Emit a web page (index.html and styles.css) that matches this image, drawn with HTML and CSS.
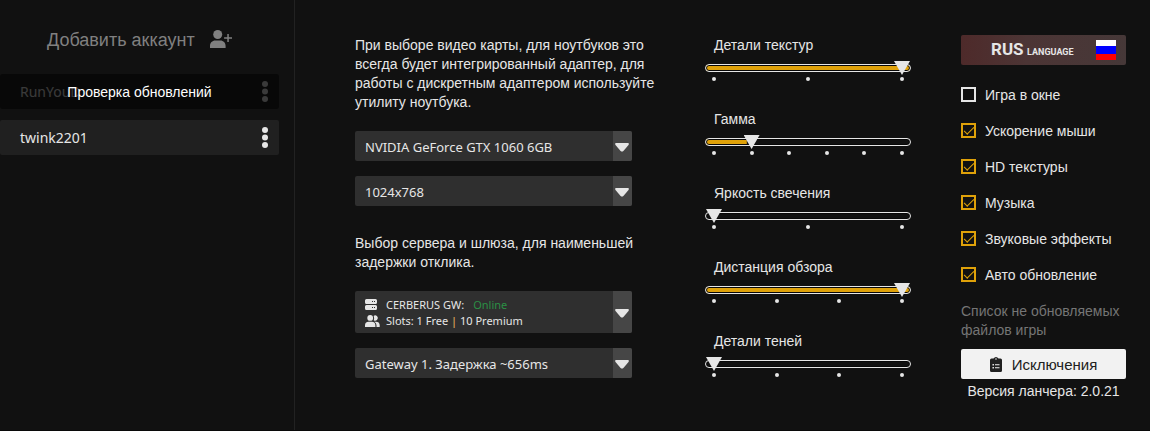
FILE: index.html
```html
<!DOCTYPE html>
<html lang="ru">
<head>
<meta charset="utf-8">
<meta name="viewport" content="width=device-width, initial-scale=1">
<title>Лаунчер</title>
<link rel="stylesheet" href="styles.css">
</head>
<body>
<div class="launcher">
  <aside class="sidebar">
    <button class="add-account" type="button">
      <span class="add-label">Добавить аккаунт</span>
      <svg class="add-icon" viewBox="0 0 23 18" aria-hidden="true"><circle cx="7.700" cy="4.500" r="4.500"/><path d="M0 18v-2c0-3.200 2.300-5.500 5.200-5.500h5.200c2.900 0 5.200 2.300 5.200 5.500v2zM17.300 4h1.500v3.300h3.200v1.500h-3.200V12h-1.500V8.800h-3.200V7.300h3.200z"/></svg>
    </button>
    <ul class="accounts">
      <li class="account">
        <span>RunYouD</span>
        <button class="dots" type="button" aria-label="Меню RunYouD"><svg viewBox="0 0 6 21" aria-hidden="true"><circle cx="3" cy="3" r="3"/><circle cx="3" cy="10.500" r="3"/><circle cx="3" cy="18" r="3"/></svg></button>
        <span class="account-overlay">Проверка обновлений</span>
      </li>
      <li class="account">
        <span>twink2201</span>
        <button class="dots" type="button" aria-label="Меню twink2201"><svg viewBox="0 0 6 21" aria-hidden="true"><circle cx="3" cy="3" r="3"/><circle cx="3" cy="10.500" r="3"/><circle cx="3" cy="18" r="3"/></svg></button>
      </li>
    </ul>
  </aside>
  <main class="settings">
    <section class="connection">
      <p class="hint" id="video-hint">При выборе видео карты, для ноутбуков это всегда будет интегрированный адаптер, для работы с дискретным адаптером используйте утилиту ноутбука.</p>
      <div class="fields">
        <div class="dropdown">
          <select class="choice" aria-labelledby="video-hint"><option>NVIDIA GeForce GTX 1060 6GB</option></select>
          <span class="arrow"><svg viewBox="0 0 14 9" aria-hidden="true"><path d="M1.200 0h11.600q1.800.3.700 1.900L8.400 7.900q-1.400 1.400-2.800 0L.5 1.900Q-.6.3 1.200 0z"/></svg></span>
        </div>
        <div class="dropdown">
          <select class="choice" aria-label="Разрешение"><option>1024x768</option></select>
          <span class="arrow"><svg viewBox="0 0 14 9" aria-hidden="true"><path d="M1.200 0h11.600q1.800.3.700 1.900L8.400 7.900q-1.400 1.400-2.800 0L.5 1.900Q-.6.3 1.200 0z"/></svg></span>
        </div>
      </div>
      <p class="hint server-hint" id="gate-hint">Выбор сервера и шлюза, для наименьшей задержки отклика.</p>
      <div class="fields">
        <button class="dropdown server" type="button">
          <span class="server-info">
            <span class="server-line"><svg class="server-icon" viewBox="0 0 15 12" aria-hidden="true"><path fill-rule="evenodd" d="M1.500 0h9Q12 0 12 1.500v2Q12 5 10.500 5h-9Q0 5 0 3.500v-2Q0 0 1.500 0zM7 2v1h1V2zm2 0v1h1V2zM1.500 6h9Q12 6 12 7.500v2q0 1.500-1.500 1.500h-9Q0 11 0 9.500v-2Q0 6 1.500 6zM7 8v1h1V8zm2 0v1h1V8z"/></svg><span>CERBERUS GW:</span><span class="online">Online</span></span>
            <span class="server-line"><svg class="server-icon" viewBox="0 0 15 12" aria-hidden="true"><circle cx="5.200" cy="2.900" r="2.900"/><path d="M0 12v-1.500q0-3.700 3.600-3.700h3.200q3.600 0 3.600 3.700V12zM8.600.9a2.600 2.600 0 1 1 .1 4.300q.9-2.200-.1-4.300zM9.300 6.700h1.600q3.600 0 3.800 3.400V12h-3.200v-1.700q0-2.200-2.200-3.600z"/></svg><span>Slots: 1 Free <span class="bar">|</span> 10 Premium</span></span>
          </span>
          <span class="arrow"><svg viewBox="0 0 14 9" aria-hidden="true"><path d="M1.200 0h11.600q1.800.3.700 1.900L8.400 7.900q-1.400 1.400-2.800 0L.5 1.900Q-.6.3 1.200 0z"/></svg></span>
        </button>
        <div class="dropdown">
          <select class="choice" aria-labelledby="gate-hint"><option>Gateway 1. Задержка ~656ms</option></select>
          <span class="arrow"><svg viewBox="0 0 14 9" aria-hidden="true"><path d="M1.200 0h11.600q1.800.3.700 1.900L8.400 7.900q-1.400 1.400-2.800 0L.5 1.900Q-.6.3 1.200 0z"/></svg></span>
        </div>
      </div>
    </section>
    <section class="sliders">
      <div class="slider">
        <label for="textures">Детали текстур</label>
        <input id="textures" type="range" min="0" max="2" value="2" style="--fill:100%">
        <div class="ticks"><i></i><i></i><i></i></div>
      </div>
      <div class="slider">
        <label for="gamma">Гамма</label>
        <input id="gamma" type="range" min="0" max="5" value="1" style="--fill:20%">
        <div class="ticks"><i></i><i></i><i></i><i></i><i></i><i></i></div>
      </div>
      <div class="slider">
        <label for="glow">Яркость свечения</label>
        <input id="glow" type="range" min="0" max="2" value="0" style="--fill:0%">
        <div class="ticks"><i></i><i></i><i></i></div>
      </div>
      <div class="slider">
        <label for="distance">Дистанция обзора</label>
        <input id="distance" type="range" min="0" max="3" value="3" style="--fill:100%">
        <div class="ticks"><i></i><i></i><i></i><i></i></div>
      </div>
      <div class="slider">
        <label for="shadows">Детали теней</label>
        <input id="shadows" type="range" min="0" max="3" value="0" style="--fill:0%">
        <div class="ticks"><i></i><i></i><i></i><i></i></div>
      </div>
    </section>
    <section class="options">
      <button class="language" type="button">
        <span class="language-name"><b>RUS</b> <small>LANGUAGE</small></span>
        <svg class="flag" viewBox="0 0 20 20" aria-hidden="true"><path fill="#fff" d="M0 0h20v6H0z"/><path fill="#00f" d="M0 6h20v8H0z"/><path fill="#f00" d="M0 14h20v6H0z"/></svg>
      </button>
      <div class="checks">
        <label class="check"><input type="checkbox"><span>Игра в окне</span></label>
        <label class="check"><input type="checkbox" checked><span>Ускорение мыши</span></label>
        <label class="check"><input type="checkbox" checked><span>HD текстуры</span></label>
        <label class="check"><input type="checkbox" checked><span>Музыка</span></label>
        <label class="check"><input type="checkbox" checked><span>Звуковые эффекты</span></label>
        <label class="check"><input type="checkbox" checked><span>Авто обновление</span></label>
      </div>
      <p class="muted">Список не обновляемых файлов игры</p>
      <button class="exclusions" type="button">
        <svg class="clipboard" viewBox="0 0 12 15" aria-hidden="true"><path fill-rule="evenodd" d="M3.500 1.500Q4.500 0 6 0t2.500 1.500h2q1.500 0 1.500 1.500v10.500q0 1.500-1.500 1.500h-9Q0 15 0 13.500V3q0-1.500 1.500-1.500zM5.200 1.500v1h1.600v-1zM2.500 7v1.400h1.400V7zm2.500.2v1h4.500v-1zM2.500 10v1.400h1.400V10zm2.500.2v1h4.500v-1z"/></svg>
        <span>Исключения</span>
      </button>
      <p class="version">Версия ланчера: 2.0.21</p>
    </section>
  </main>
</div>
</body>
</html>
```
FILE: styles.css
```css
* {
  box-sizing: border-box;
}

body {
  margin: 0;
  background: #111;
  color: #e6e6e6;
  font: 14px/19px "Liberation Sans", Arial, sans-serif;
}

p,
ul {
  margin: 0;
  padding: 0;
}

button {
  border: 0;
  padding: 0;
  background: none;
  color: inherit;
  font: inherit;
  cursor: pointer;
}

svg {
  display: block;
  flex: none;
  fill: currentColor;
}

.launcher {
  display: flex;
  min-height: 100vh;
  border-bottom: 1px solid #090909;
}

/* Accounts */
.sidebar {
  flex: 0 0 295px;
  padding: 28px 15px 0 0;
  border-right: 1px solid #222;
}

.add-account {
  display: flex;
  align-items: center;
  gap: 15px;
  height: 22px;
  margin-left: 47px;
  color: #808080;
  font-size: 18px;
}

.add-label {
  padding-top: 2px;
}

.add-icon {
  width: 23px;
  height: 18px;
}

.accounts {
  display: grid;
  gap: 11px;
  margin-top: 24px;
  list-style: none;
}

.account {
  position: relative;
  display: flex;
  align-items: center;
  justify-content: space-between;
  height: 35px;
  padding: 0 11px 0 20px;
  border-radius: 2px;
  background: #202020;
  font-family: "Noto Sans", sans-serif;
}

.dots svg {
  width: 6px;
  height: 21px;
}

.account-overlay {
  position: absolute;
  inset: 0;
  display: flex;
  align-items: center;
  justify-content: center;
  padding-top: 2px;
  border-radius: 2px;
  background: rgba(0, 0, 0, 0.75);
  color: #fff;
  font-family: "Liberation Sans", Arial, sans-serif;
}

/* Settings columns */
.settings {
  flex: 1;
  display: grid;
  grid-template-columns: minmax(0, 300fr) minmax(0, 206fr) 165px;
  gap: 50px;
  padding: 35px 24px 20px 60px;
}

.hint {
  padding-top: 1px;
}

.server-hint {
  padding-top: 28px;
}

.fields {
  display: grid;
  gap: 15px;
  margin: 19px 23px 0 0;
}

.dropdown {
  position: relative;
  display: flex;
  width: 100%;
  border-radius: 2px;
  overflow: hidden;
  background: #2f2f2f;
}

.choice {
  flex: 1;
  min-width: 0;
  height: 30px;
  padding: 2px 29px 0 10px;
  border: 0;
  appearance: none;
  background: none;
  color: inherit;
  font: 13px/19px "Noto Sans", sans-serif;
}

.arrow {
  position: absolute;
  inset: 0 0 0 auto;
  display: flex;
  align-items: center;
  width: 19px;
  padding: 3px 0 0 2px;
  background: #464646;
  pointer-events: none;
}

.arrow svg {
  width: 14px;
  height: 9px;
}

.server {
  padding: 6px 29px 4px 10px;
  font: 11px/16px "Noto Sans", sans-serif;
  text-align: left;
}

.server-info {
  display: grid;
}

.server-line {
  display: flex;
  align-items: center;
  gap: 6px;
}

.server-icon {
  width: 15px;
  height: 12px;
}

.online {
  padding-left: 3px;
  color: #2b8f45;
}

.bar {
  color: #f0c060;
}

/* Sliders */
.sliders {
  display: grid;
  align-content: start;
  gap: 29px;
  padding-top: 1px;
}

.slider {
  display: grid;
}

.slider label {
  padding-left: 9px;
}

.slider input {
  appearance: none;
  width: 100%;
  height: 8px;
  margin: 9px 0 5px;
  border: 1px solid #e6e6e6;
  border-radius: 4px;
  background: linear-gradient(#dfa109, #dfa109) 0 0 / var(--fill) 100% no-repeat;
  box-shadow: inset 0 0 0 1px #080808;
}

.slider input::-webkit-slider-thumb {
  appearance: none;
  width: 16px;
  height: 14px;
  background: #e6e6e6;
  clip-path: polygon(0 0, 100% 0, 50% 100%);
}

.ticks {
  display: flex;
  justify-content: space-between;
  padding: 0 7px;
}

.ticks i {
  width: 4px;
  height: 4px;
  border-radius: 50%;
  background: #e6e6e6;
}

/* Options */
.language {
  display: flex;
  align-items: center;
  justify-content: space-between;
  width: 100%;
  height: 30px;
  padding: 0 10px 0 30px;
  border-radius: 2px;
  background: linear-gradient(90deg, #4e2a2a, #4c3535 40%, #463838);
  font-family: Roboto, sans-serif;
}

.language-name {
  padding-top: 2px;
}

.language-name b {
  font-size: 17px;
}

.language-name small {
  font-size: 9px;
  font-weight: 700;
}

.flag {
  width: 20px;
  height: 20px;
}

.checks {
  display: grid;
  gap: 15px;
  margin-top: 19px;
}

.check {
  display: flex;
  align-items: center;
  gap: 9px;
}

.check span {
  padding-top: 2px;
}

.check input {
  appearance: none;
  width: 15px;
  height: 15px;
  margin: 0;
  border: 2px solid #e6e6e6;
}

.check input:checked {
  display: grid;
  place-items: center;
  border-color: #dfa109;
}

.check input:checked::before {
  content: "";
  width: 9px;
  height: 4px;
  margin-bottom: 3px;
  border: solid #dfa109;
  border-width: 0 0 1px 1px;
  transform: rotate(-45deg);
}

.muted {
  margin-top: 17px;
  color: #757575;
}

.exclusions {
  display: flex;
  align-items: center;
  justify-content: center;
  gap: 10px;
  width: 100%;
  height: 30px;
  margin-top: 9px;
  border-radius: 2px;
  background: #f2f2f2;
  color: #202020;
  font-size: 15px;
}

.clipboard {
  width: 12px;
  height: 15px;
}

.version {
  margin-top: 3px;
  text-align: center;
}
```
